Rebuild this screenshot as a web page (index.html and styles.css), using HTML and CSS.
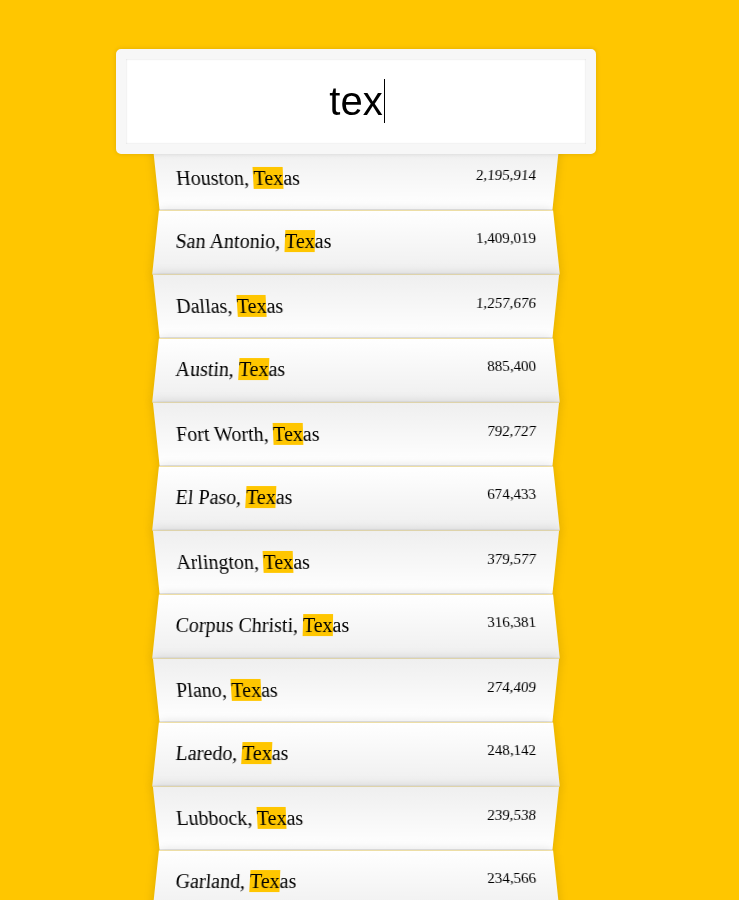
FILE: index.html
```html
<!DOCTYPE html>
<html lang="en">
<head>
<meta charset="utf-8">
<title>Type Ahead</title>
<link rel="stylesheet" href="styles.css">
</head>
<body>
<form class="search-form">
  <div class="search" role="textbox" aria-label="City or State">tex<span class="caret"></span></div>
  <ul class="suggestions">
    <li><span class="name">Houston, <span class="hl">Tex</span>as</span><span class="population">2,195,914</span></li>
    <li><span class="name">San Antonio, <span class="hl">Tex</span>as</span><span class="population">1,409,019</span></li>
    <li><span class="name">Dallas, <span class="hl">Tex</span>as</span><span class="population">1,257,676</span></li>
    <li><span class="name">Austin, <span class="hl">Tex</span>as</span><span class="population">885,400</span></li>
    <li><span class="name">Fort Worth, <span class="hl">Tex</span>as</span><span class="population">792,727</span></li>
    <li><span class="name">El Paso, <span class="hl">Tex</span>as</span><span class="population">674,433</span></li>
    <li><span class="name">Arlington, <span class="hl">Tex</span>as</span><span class="population">379,577</span></li>
    <li><span class="name">Corpus Christi, <span class="hl">Tex</span>as</span><span class="population">316,381</span></li>
    <li><span class="name">Plano, <span class="hl">Tex</span>as</span><span class="population">274,409</span></li>
    <li><span class="name">Laredo, <span class="hl">Tex</span>as</span><span class="population">248,142</span></li>
    <li><span class="name">Lubbock, <span class="hl">Tex</span>as</span><span class="population">239,538</span></li>
    <li><span class="name">Garland, <span class="hl">Tex</span>as</span><span class="population">234,566</span></li>
    <li><span class="name">Irving, <span class="hl">Tex</span>as</span><span class="population">228,653</span></li>
    <li><span class="name">Amarillo, <span class="hl">Tex</span>as</span><span class="population">196,429</span></li>
  </ul>
</form>
</body>
</html>
```

FILE: styles.css
```css
html {
  box-sizing: border-box;
  background: #ffc600;
  font-family: "Liberation Serif", "Times New Roman", serif;
  font-size: 20px;
  font-weight: 200;
}

*, *::before, *::after {
  box-sizing: inherit;
}

body {
  margin: 0;
}

.search-form {
  width: 400px;
  margin: 49px 0 0 156px;
  display: flex;
  flex-direction: column;
}

.search {
  z-index: 2;
  width: 480px;
  margin: 0 -40px -10px;
  padding: 20px;
  text-align: center;
  border: 10px solid #f7f7f7;
  border-radius: 5px;
  font-family: "Liberation Sans", Arial, sans-serif;
  font-size: 40px;
  line-height: normal;
  color: #000;
  background: #fff;
  box-shadow: 0 0 5px rgba(0, 0, 0, 0.12), inset 0 0 2px rgba(0, 0, 0, 0.19);
}

.caret {
  display: inline-block;
  width: 1px;
  height: 44px;
  margin-left: 1px;
  margin-right: -2px;
  background: #000;
  vertical-align: text-top;
}

.suggestions {
  margin: 0;
  padding: 0;
}

.suggestions li {
  list-style: none;
  border-bottom: 1px solid #d8d8d8;
  box-shadow: 0 0 10px rgba(0, 0, 0, 0.14);
  margin: 0;
  padding: 20px;
  display: flex;
  justify-content: space-between;
  color: #000;
}

.suggestions li:nth-child(even) {
  transform: perspective(100px) rotateX(3deg) translateY(2px) scale(1.001);
  background: linear-gradient(to bottom, #ffffff 0%, #efefef 100%);
}

.suggestions li:nth-child(odd) {
  transform: perspective(100px) rotateX(-3deg) translateY(3px);
  background: linear-gradient(to top, #ffffff 0%, #efefef 100%);
}

.population {
  font-size: 15px;
}

.hl {
  background: #ffc600;
}
```
